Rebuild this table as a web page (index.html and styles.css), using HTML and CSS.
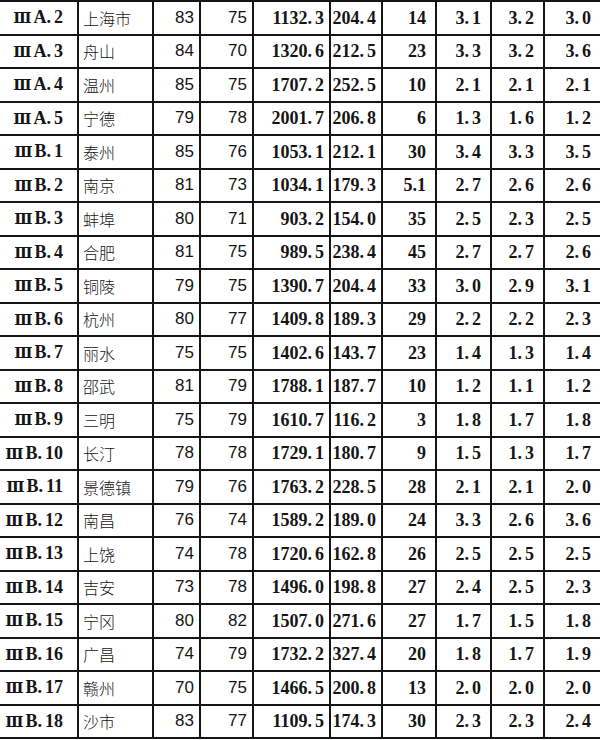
FILE: index.html
```html
<!DOCTYPE html>
<html lang="zh">
<head>
<meta charset="utf-8">
<link rel="stylesheet" href="styles.css">
</head>
<body>
<table class="grid">
<colgroup>
<col class="c1"><col class="c2"><col class="c3"><col class="c4"><col class="c5"><col class="c6"><col class="c7"><col class="c8"><col class="c9"><col class="c10">
</colgroup>
<tbody>
<tr><td class="lab"><span class="rn">Ⅲ</span>A<span class="d">.</span>2</td><td class="city">上海市</td><td class="sans">83</td><td class="sans">75</td><td class="num">1132<span class="d">.</span>3</td><td class="num">204<span class="d">.</span>4</td><td class="cnt">14</td><td class="dec">3<span class="d">.</span>1</td><td class="dec">3<span class="d">.</span>2</td><td class="dec">3<span class="d">.</span>0</td></tr>
<tr><td class="lab"><span class="rn">Ⅲ</span>A<span class="d">.</span>3</td><td class="city">舟山</td><td class="sans">84</td><td class="sans">70</td><td class="num">1320<span class="d">.</span>6</td><td class="num">212<span class="d">.</span>5</td><td class="cnt">23</td><td class="dec">3<span class="d">.</span>3</td><td class="dec">3<span class="d">.</span>2</td><td class="dec">3<span class="d">.</span>6</td></tr>
<tr><td class="lab"><span class="rn">Ⅲ</span>A<span class="d">.</span>4</td><td class="city">温州</td><td class="sans">85</td><td class="sans">75</td><td class="num">1707<span class="d">.</span>2</td><td class="num">252<span class="d">.</span>5</td><td class="cnt">10</td><td class="dec">2<span class="d">.</span>1</td><td class="dec">2<span class="d">.</span>1</td><td class="dec">2<span class="d">.</span>1</td></tr>
<tr><td class="lab"><span class="rn">Ⅲ</span>A<span class="d">.</span>5</td><td class="city">宁德</td><td class="sans">79</td><td class="sans">78</td><td class="num">2001<span class="d">.</span>7</td><td class="num">206<span class="d">.</span>8</td><td class="cnt">6</td><td class="dec">1<span class="d">.</span>3</td><td class="dec">1<span class="d">.</span>6</td><td class="dec">1<span class="d">.</span>2</td></tr>
<tr><td class="lab"><span class="rn">Ⅲ</span>B<span class="d">.</span>1</td><td class="city">泰州</td><td class="sans">85</td><td class="sans">76</td><td class="num">1053<span class="d">.</span>1</td><td class="num">212<span class="d">.</span>1</td><td class="cnt">30</td><td class="dec">3<span class="d">.</span>4</td><td class="dec">3<span class="d">.</span>3</td><td class="dec">3<span class="d">.</span>5</td></tr>
<tr><td class="lab"><span class="rn">Ⅲ</span>B<span class="d">.</span>2</td><td class="city">南京</td><td class="sans">81</td><td class="sans">73</td><td class="num">1034<span class="d">.</span>1</td><td class="num">179<span class="d">.</span>3</td><td class="cnt">5.1</td><td class="dec">2<span class="d">.</span>7</td><td class="dec">2<span class="d">.</span>6</td><td class="dec">2<span class="d">.</span>6</td></tr>
<tr><td class="lab"><span class="rn">Ⅲ</span>B<span class="d">.</span>3</td><td class="city">蚌埠</td><td class="sans">80</td><td class="sans">71</td><td class="num">903<span class="d">.</span>2</td><td class="num">154<span class="d">.</span>0</td><td class="cnt">35</td><td class="dec">2<span class="d">.</span>5</td><td class="dec">2<span class="d">.</span>3</td><td class="dec">2<span class="d">.</span>5</td></tr>
<tr><td class="lab"><span class="rn">Ⅲ</span>B<span class="d">.</span>4</td><td class="city">合肥</td><td class="sans">81</td><td class="sans">75</td><td class="num">989<span class="d">.</span>5</td><td class="num">238<span class="d">.</span>4</td><td class="cnt">45</td><td class="dec">2<span class="d">.</span>7</td><td class="dec">2<span class="d">.</span>7</td><td class="dec">2<span class="d">.</span>6</td></tr>
<tr><td class="lab"><span class="rn">Ⅲ</span>B<span class="d">.</span>5</td><td class="city">铜陵</td><td class="sans">79</td><td class="sans">75</td><td class="num">1390<span class="d">.</span>7</td><td class="num">204<span class="d">.</span>4</td><td class="cnt">33</td><td class="dec">3<span class="d">.</span>0</td><td class="dec">2<span class="d">.</span>9</td><td class="dec">3<span class="d">.</span>1</td></tr>
<tr><td class="lab"><span class="rn">Ⅲ</span>B<span class="d">.</span>6</td><td class="city">杭州</td><td class="sans">80</td><td class="sans">77</td><td class="num">1409<span class="d">.</span>8</td><td class="num">189<span class="d">.</span>3</td><td class="cnt">29</td><td class="dec">2<span class="d">.</span>2</td><td class="dec">2<span class="d">.</span>2</td><td class="dec">2<span class="d">.</span>3</td></tr>
<tr><td class="lab"><span class="rn">Ⅲ</span>B<span class="d">.</span>7</td><td class="city">丽水</td><td class="sans">75</td><td class="sans">75</td><td class="num">1402<span class="d">.</span>6</td><td class="num">143<span class="d">.</span>7</td><td class="cnt">23</td><td class="dec">1<span class="d">.</span>4</td><td class="dec">1<span class="d">.</span>3</td><td class="dec">1<span class="d">.</span>4</td></tr>
<tr><td class="lab"><span class="rn">Ⅲ</span>B<span class="d">.</span>8</td><td class="city">邵武</td><td class="sans">81</td><td class="sans">79</td><td class="num">1788<span class="d">.</span>1</td><td class="num">187<span class="d">.</span>7</td><td class="cnt">10</td><td class="dec">1<span class="d">.</span>2</td><td class="dec">1<span class="d">.</span>1</td><td class="dec">1<span class="d">.</span>2</td></tr>
<tr><td class="lab"><span class="rn">Ⅲ</span>B<span class="d">.</span>9</td><td class="city">三明</td><td class="sans">75</td><td class="sans">79</td><td class="num">1610<span class="d">.</span>7</td><td class="num">116<span class="d">.</span>2</td><td class="cnt">3</td><td class="dec">1<span class="d">.</span>8</td><td class="dec">1<span class="d">.</span>7</td><td class="dec">1<span class="d">.</span>8</td></tr>
<tr><td class="lab"><span class="rn">Ⅲ</span>B<span class="d">.</span>10</td><td class="city">长汀</td><td class="sans">78</td><td class="sans">78</td><td class="num">1729<span class="d">.</span>1</td><td class="num">180<span class="d">.</span>7</td><td class="cnt">9</td><td class="dec">1<span class="d">.</span>5</td><td class="dec">1<span class="d">.</span>3</td><td class="dec">1<span class="d">.</span>7</td></tr>
<tr><td class="lab"><span class="rn">Ⅲ</span>B<span class="d">.</span>11</td><td class="city">景德镇</td><td class="sans">79</td><td class="sans">76</td><td class="num">1763<span class="d">.</span>2</td><td class="num">228<span class="d">.</span>5</td><td class="cnt">28</td><td class="dec">2<span class="d">.</span>1</td><td class="dec">2<span class="d">.</span>1</td><td class="dec">2<span class="d">.</span>0</td></tr>
<tr><td class="lab"><span class="rn">Ⅲ</span>B<span class="d">.</span>12</td><td class="city">南昌</td><td class="sans">76</td><td class="sans">74</td><td class="num">1589<span class="d">.</span>2</td><td class="num">189<span class="d">.</span>0</td><td class="cnt">24</td><td class="dec">3<span class="d">.</span>3</td><td class="dec">2<span class="d">.</span>6</td><td class="dec">3<span class="d">.</span>6</td></tr>
<tr><td class="lab"><span class="rn">Ⅲ</span>B<span class="d">.</span>13</td><td class="city">上饶</td><td class="sans">74</td><td class="sans">78</td><td class="num">1720<span class="d">.</span>6</td><td class="num">162<span class="d">.</span>8</td><td class="cnt">26</td><td class="dec">2<span class="d">.</span>5</td><td class="dec">2<span class="d">.</span>5</td><td class="dec">2<span class="d">.</span>5</td></tr>
<tr><td class="lab"><span class="rn">Ⅲ</span>B<span class="d">.</span>14</td><td class="city">吉安</td><td class="sans">73</td><td class="sans">78</td><td class="num">1496<span class="d">.</span>0</td><td class="num">198<span class="d">.</span>8</td><td class="cnt">27</td><td class="dec">2<span class="d">.</span>4</td><td class="dec">2<span class="d">.</span>5</td><td class="dec">2<span class="d">.</span>3</td></tr>
<tr><td class="lab"><span class="rn">Ⅲ</span>B<span class="d">.</span>15</td><td class="city">宁冈</td><td class="sans">80</td><td class="sans">82</td><td class="num">1507<span class="d">.</span>0</td><td class="num">271<span class="d">.</span>6</td><td class="cnt">27</td><td class="dec">1<span class="d">.</span>7</td><td class="dec">1<span class="d">.</span>5</td><td class="dec">1<span class="d">.</span>8</td></tr>
<tr><td class="lab"><span class="rn">Ⅲ</span>B<span class="d">.</span>16</td><td class="city">广昌</td><td class="sans">74</td><td class="sans">79</td><td class="num">1732<span class="d">.</span>2</td><td class="num">327<span class="d">.</span>4</td><td class="cnt">20</td><td class="dec">1<span class="d">.</span>8</td><td class="dec">1<span class="d">.</span>7</td><td class="dec">1<span class="d">.</span>9</td></tr>
<tr><td class="lab"><span class="rn">Ⅲ</span>B<span class="d">.</span>17</td><td class="city">赣州</td><td class="sans">70</td><td class="sans">75</td><td class="num">1466<span class="d">.</span>5</td><td class="num">200<span class="d">.</span>8</td><td class="cnt">13</td><td class="dec">2<span class="d">.</span>0</td><td class="dec">2<span class="d">.</span>0</td><td class="dec">2<span class="d">.</span>0</td></tr>
<tr><td class="lab"><span class="rn">Ⅲ</span>B<span class="d">.</span>18</td><td class="city">沙市</td><td class="sans">83</td><td class="sans">77</td><td class="num">1109<span class="d">.</span>5</td><td class="num">174<span class="d">.</span>3</td><td class="cnt">30</td><td class="dec">2<span class="d">.</span>3</td><td class="dec">2<span class="d">.</span>3</td><td class="dec">2<span class="d">.</span>4</td></tr>
</tbody>
</table>
</body>
</html>
```

FILE: styles.css
```css
html, body {
  margin: 0;
  padding: 0;
  background: #fff;
}
body {
  width: 600px;
  color: #151515;
  font-family: "Liberation Serif", "Noto Sans CJK SC", serif;
}
.grid {
  width: 600px;
  border-collapse: collapse;
  table-layout: fixed;
  border-top: 2px solid #151515;
  border-bottom: 2px solid #151515;
}
.c1 { width: 78px; }
.c2 { width: 75px; }
.c3 { width: 47px; }
.c4 { width: 53px; }
.c5 { width: 77px; }
.c6 { width: 52px; }
.c7 { width: 54px; }
.c8 { width: 55px; }
.c9 { width: 53px; }
.c10 { width: 56px; }
.grid td {
  box-sizing: border-box;
  height: 33.5px;
  border: 2px solid #151515;
  padding: 0 5px 0 0;
  text-align: right;
  vertical-align: middle;
  white-space: nowrap;
  font-size: 18px;
  line-height: 18px;
  font-weight: bold;
  overflow: hidden;
}
.grid td:first-child { border-left: none; }
.grid td:last-child { border-right: none; }
.lab {
  padding-right: 14px !important;
  font-family: "Liberation Serif", serif;
  font-size: 18px;
}
.rn {
  font-family: "DejaVu Serif", serif;
  font-size: 15px;
  font-weight: bold;
  margin-right: 2px;
}
.city {
  text-align: left !important;
  padding-left: 4px !important;
  font-family: "Noto Sans CJK SC", sans-serif;
  font-weight: 300 !important;
  font-size: 16px !important;
}
.sans {
  font-family: "Liberation Sans", sans-serif;
  font-weight: normal !important;
  font-size: 17px !important;
}
.num {
  padding-right: 5px !important;
}
.cnt {
  padding-right: 9px !important;
}
.dec {
  padding-right: 9px !important;
}
.d {
  margin-right: 3px;
}
```
